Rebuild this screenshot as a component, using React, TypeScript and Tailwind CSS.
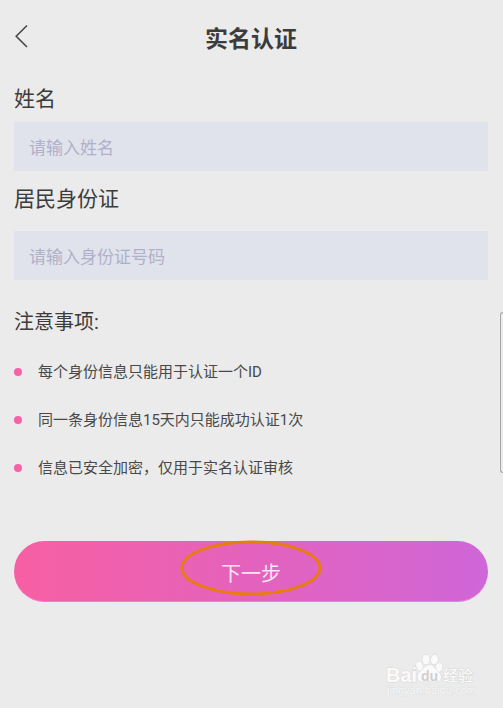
const notices = [
  "每个身份信息只能用于认证一个ID",
  "同一条身份信息15天内只能成功认证1次",
  "信息已安全加密，仅用于实名认证审核",
];

function Header() {
  return (
    <header className="grid grid-cols-[32px_1fr_32px] items-center h-[76px]">
      <button type="button" aria-label="返回" className="flex items-center h-8 pb-1">
        <svg viewBox="0 0 14 24" className="w-[14px] h-6" fill="none" stroke="#484848" strokeWidth="1.6">
          <path d="M13 1.5 2.2 12.3 13 23" />
        </svg>
      </button>
      <h1 className="pt-1 text-[23px] leading-8 font-bold text-center text-[#3c3c3c]">实名认证</h1>
    </header>
  );
}

function Watermark() {
  return (
    <svg
      viewBox="0 0 94 46"
      className="absolute right-6 bottom-[10px] w-[94px] h-[46px] pointer-events-none"
      fill="#fafafa"
      stroke="#d8d8d8"
      strokeWidth="1"
      paintOrder="stroke"
      aria-hidden="true"
    >
      <ellipse cx="34.500" cy="14" rx="3.300" ry="4.400" transform="rotate(-12 34.500 14)" />
      <ellipse cx="41" cy="7.500" rx="3.600" ry="4.800" />
      <ellipse cx="49.500" cy="7.500" rx="3.600" ry="4.800" transform="rotate(8 49.500 7.500)" />
      <ellipse cx="54" cy="15.500" rx="3.300" ry="4.400" transform="rotate(15 54 15.500)" />
      <path d="M44.5 13c-4 0-5.500 3.500-8 5.500-3 2.500-4.500 4.500-3.500 8 1 3.400 4.500 3.500 8 3h7.500c4 .6 7 0 7.500-3.500.4-3.500-1.500-5-4-7.500-2.500-2.300-3.500-5.500-7.500-5.500Z" />
      <text x="1" y="30" fontSize="20" className="font-['Liberation_Sans',sans-serif] font-bold">Bai</text>
      <text x="36" y="29" fontSize="14" fill="#cfcfcf" stroke="none" className="font-['Liberation_Sans',sans-serif] font-bold">du</text>
      <text x="58" y="29" fontSize="15" className="font-['Noto_Sans_CJK_SC',sans-serif] font-medium">经验</text>
      <text x="2" y="42" fontSize="11" fill="#f5f5f5" stroke="#e2e2e2" className="font-['Liberation_Sans',sans-serif]">jingyan.baidu.com</text>
    </svg>
  );
}

export default function App() {
  return (
    <div className="relative min-h-screen overflow-hidden bg-[#ebebeb] pl-[14px] pr-[15px] text-[#3c3c3c] font-[Roboto,'Noto_Sans_CJK_SC',sans-serif]">
      <Header />

      <form onSubmit={(e) => e.preventDefault()}>
        <label htmlFor="name" className="block pt-[7px] pb-[7px] text-[21px] leading-8">
          姓名
        </label>
        <input
          id="name"
          type="text"
          placeholder="请输入姓名"
          className="block w-full h-[49px] px-[15px] pt-0.5 text-[17px] bg-[#e0e3eb] placeholder:text-[#b0b0ca] focus:outline-none"
        />

        <label htmlFor="idcard" className="block pt-3 pb-4 text-[21px] leading-8">
          居民身份证
        </label>
        <input
          id="idcard"
          type="text"
          placeholder="请输入身份证号码"
          className="block w-full h-[49px] px-[15px] pt-0.5 text-[17px] bg-[#e0e3eb] placeholder:text-[#b0b0ca] focus:outline-none"
        />

        <h2 className="mt-[26px] text-xl leading-8">注意事项:</h2>
        <ul className="mt-[22px] flex flex-col gap-6 text-[15px] leading-6 text-[#484848]">
          {notices.map((text) => (
            <li key={text} className="flex items-center gap-4">
              <span className="size-2 shrink-0 rounded-full bg-[#f561a4]" />
              {text}
            </li>
          ))}
        </ul>

        <button
          type="submit"
          className="relative mt-[61px] flex w-full h-[61px] items-center justify-center rounded-full border-b border-[#f878d8] bg-linear-to-r from-[#f85fa2] via-[#e462bd] to-[#cf66d8] pt-1.5 text-xl text-[#fbe6f5]"
        >
          下一步
          <svg
            viewBox="0 0 142 56"
            className="absolute left-1/2 -top-px w-[142px] h-14 -translate-x-1/2"
            fill="none"
            stroke="#e87c10"
            strokeWidth="3"
            aria-hidden="true"
          >
            <ellipse cx="71" cy="28" rx="69" ry="26" />
          </svg>
        </button>
      </form>

      <div className="absolute right-0 top-[312px] w-[3px] h-[161px] rounded-l-md border border-r-0 border-[#a8a8a8]" />
      <Watermark />
    </div>
  );
}
